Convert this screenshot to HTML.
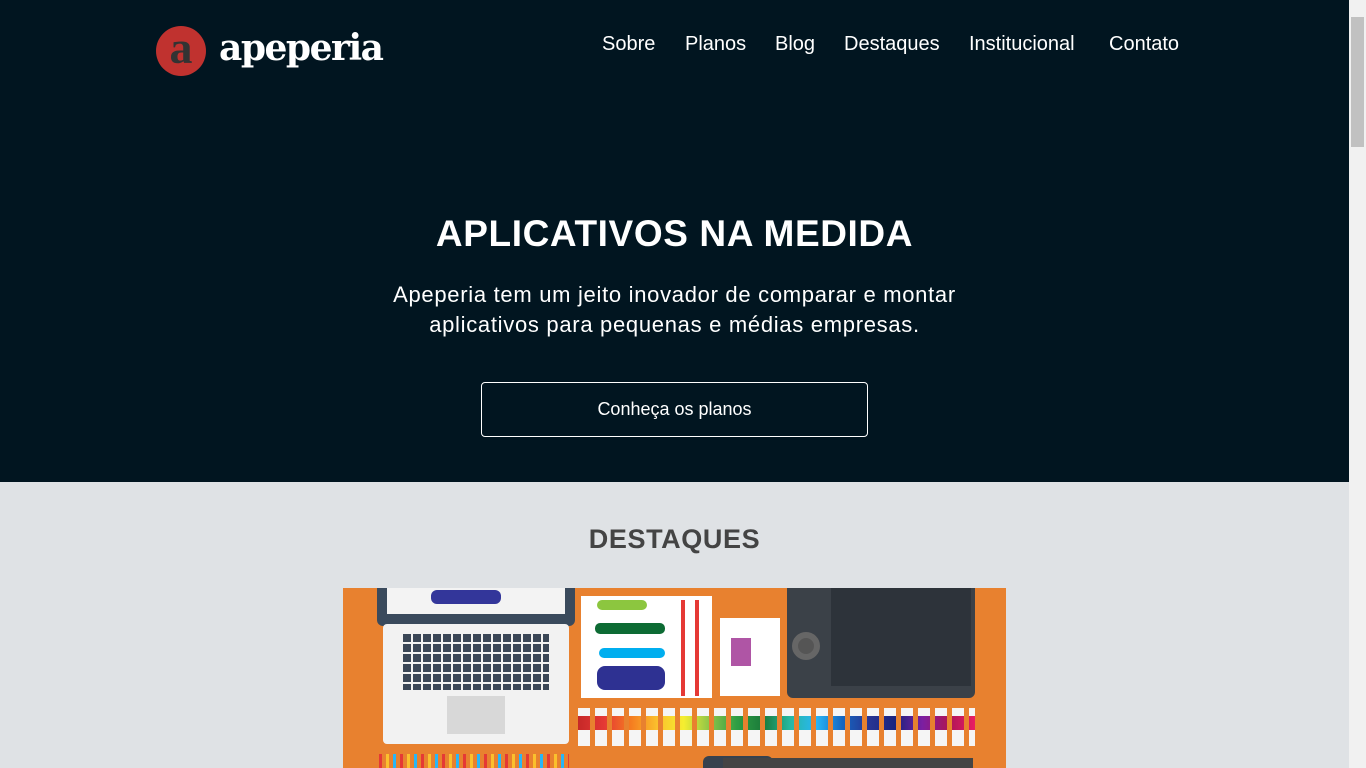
<!DOCTYPE html>
<html><head><meta charset="utf-8"><style>
*{margin:0;padding:0;box-sizing:border-box}
body{width:1366px;height:768px;overflow:hidden;background:#dfe2e5;font-family:"Liberation Sans",sans-serif;position:relative}
.hero{position:absolute;left:0;top:0;width:1349px;height:482px;background:#011520;color:#fff}
.logo{position:absolute;left:156px;top:26px;width:50px;height:50px;border-radius:50%;background:#c0322f;color:#333;font:bold 46px/44px "Liberation Serif",serif;text-align:center}
.brand{position:absolute;left:219px;top:25px;font:bold 36px/46px "DejaVu Serif","Liberation Serif",serif;letter-spacing:-1.5px;color:#fff}
.nav{position:absolute;top:33px;font-size:20px;color:#fff}
h1{position:absolute;left:0;width:1349px;top:212px;text-align:center;font:bold 37px/44px "Liberation Sans",sans-serif;letter-spacing:0.6px}
.sub{position:absolute;left:0;width:1349px;top:280px;text-align:center;font-size:22px;line-height:30px;letter-spacing:0.7px}
.btn{position:absolute;left:481px;top:382px;width:387px;height:55px;border:1px solid #fff;border-radius:4px;text-align:center;font-size:18px;line-height:53px}
h2{position:absolute;left:0;width:1349px;top:522px;text-align:center;font:bold 27px/34px "Liberation Sans",sans-serif;letter-spacing:0.6px;color:#444}
.img{position:absolute;left:343px;top:588px;width:663px;height:180px;background:#e8812f;overflow:hidden}
.a{position:absolute}
.sb{position:absolute;left:1349px;top:0;width:17px;height:768px;background:#f1f1f1}
.sb div{position:absolute;left:2px;top:17px;width:13px;height:130px;background:#c1c1c1}
</style></head><body>
<div class="hero">
<div class="logo">a</div><div class="brand">apeperia</div>
<div class="nav" style="left:602px">Sobre</div>
<div class="nav" style="left:685px">Planos</div>
<div class="nav" style="left:775px">Blog</div>
<div class="nav" style="left:844px">Destaques</div>
<div class="nav" style="left:969px">Institucional</div>
<div class="nav" style="left:1109px">Contato</div>
<h1>APLICATIVOS NA MEDIDA</h1>
<div class="sub">Apeperia tem um jeito inovador de comparar e montar<br>aplicativos para pequenas e médias empresas.</div>
<div class="btn">Conheça os planos</div>
</div>
<h2>DESTAQUES</h2>
<div class="img">
<div class="a" style="left:34px;top:0;width:198px;height:38px;background:#3a4a5c;border-radius:0 0 6px 6px"></div>
<div class="a" style="left:44px;top:0;width:178px;height:26px;background:#f3f3f3"></div>
<div class="a" style="left:88px;top:2px;width:70px;height:14px;background:#33369a;border-radius:6px"></div>
<div class="a" style="left:40px;top:36px;width:186px;height:120px;background:#f2f2f2;border-radius:4px"></div>
<div class="a" style="left:60px;top:46px;width:146px;height:56px;background:repeating-linear-gradient(90deg,#3a4656 0 8px,#f2f2f2 8px 10px),#3a4656"></div>
<div class="a" style="left:60px;top:46px;width:146px;height:56px;background:repeating-linear-gradient(180deg,transparent 0 8px,#f2f2f2 8px 10px)"></div>
<div class="a" style="left:104px;top:108px;width:58px;height:38px;background:#d8d8d8"></div>
<div class="a" style="left:238px;top:8px;width:131px;height:102px;background:#fff"></div>
<div class="a" style="left:254px;top:12px;width:50px;height:10px;background:#8cc63f;border-radius:5px"></div>
<div class="a" style="left:252px;top:35px;width:70px;height:11px;background:#0d6b34;border-radius:5px"></div>
<div class="a" style="left:256px;top:60px;width:66px;height:10px;background:#00aeef;border-radius:5px"></div>
<div class="a" style="left:254px;top:78px;width:68px;height:24px;background:#2e3192;border-radius:8px"></div>
<div class="a" style="left:338px;top:12px;width:4px;height:96px;background:#e53935"></div>
<div class="a" style="left:352px;top:12px;width:4px;height:96px;background:#e53935"></div>
<div class="a" style="left:377px;top:30px;width:60px;height:78px;background:#fff"></div>
<div class="a" style="left:388px;top:50px;width:20px;height:28px;background:#9b2a8e;opacity:.8"></div>
<div class="a" style="left:444px;top:0;width:188px;height:110px;background:#3b4148;border-radius:0 0 6px 6px"></div>
<div class="a" style="left:488px;top:0;width:140px;height:98px;background:#2d333a"></div>
<div class="a" style="left:449px;top:44px;width:28px;height:28px;border-radius:50%;background:#555;border:6px solid #666"></div>
<div class="a" style="left:235px;top:120px;width:397px;height:38px;background:repeating-linear-gradient(90deg,#f5f5f5 0 12px,transparent 12px 17px)"></div>
<div class="a" style="left:235px;top:128px;width:397px;height:14px;background:linear-gradient(90deg,#c62828,#e53935,#f57c20,#fbc02d,#f5ee30,#8bc34a,#2e9e44,#1b7a3a,#26b8a0,#29b6f6,#1565c0,#283593,#1a237e,#7b1fa2,#ad1457,#e91e63);-webkit-mask:repeating-linear-gradient(90deg,#000 0 12px,transparent 12px 17px)"></div>
<div class="a" style="left:36px;top:166px;width:190px;height:14px;background:repeating-linear-gradient(90deg,#e53935 0 3px,transparent 3px 7px,#fbc02d 7px 10px,transparent 10px 14px,#29b6f6 14px 17px,transparent 17px 21px)"></div>
<div class="a" style="left:360px;top:168px;width:70px;height:12px;background:#37424e;border-radius:6px 6px 0 0"></div>
<div class="a" style="left:380px;top:170px;width:250px;height:10px;background:#444"></div>
</div>
<div class="sb"><div></div></div>
</body></html>
